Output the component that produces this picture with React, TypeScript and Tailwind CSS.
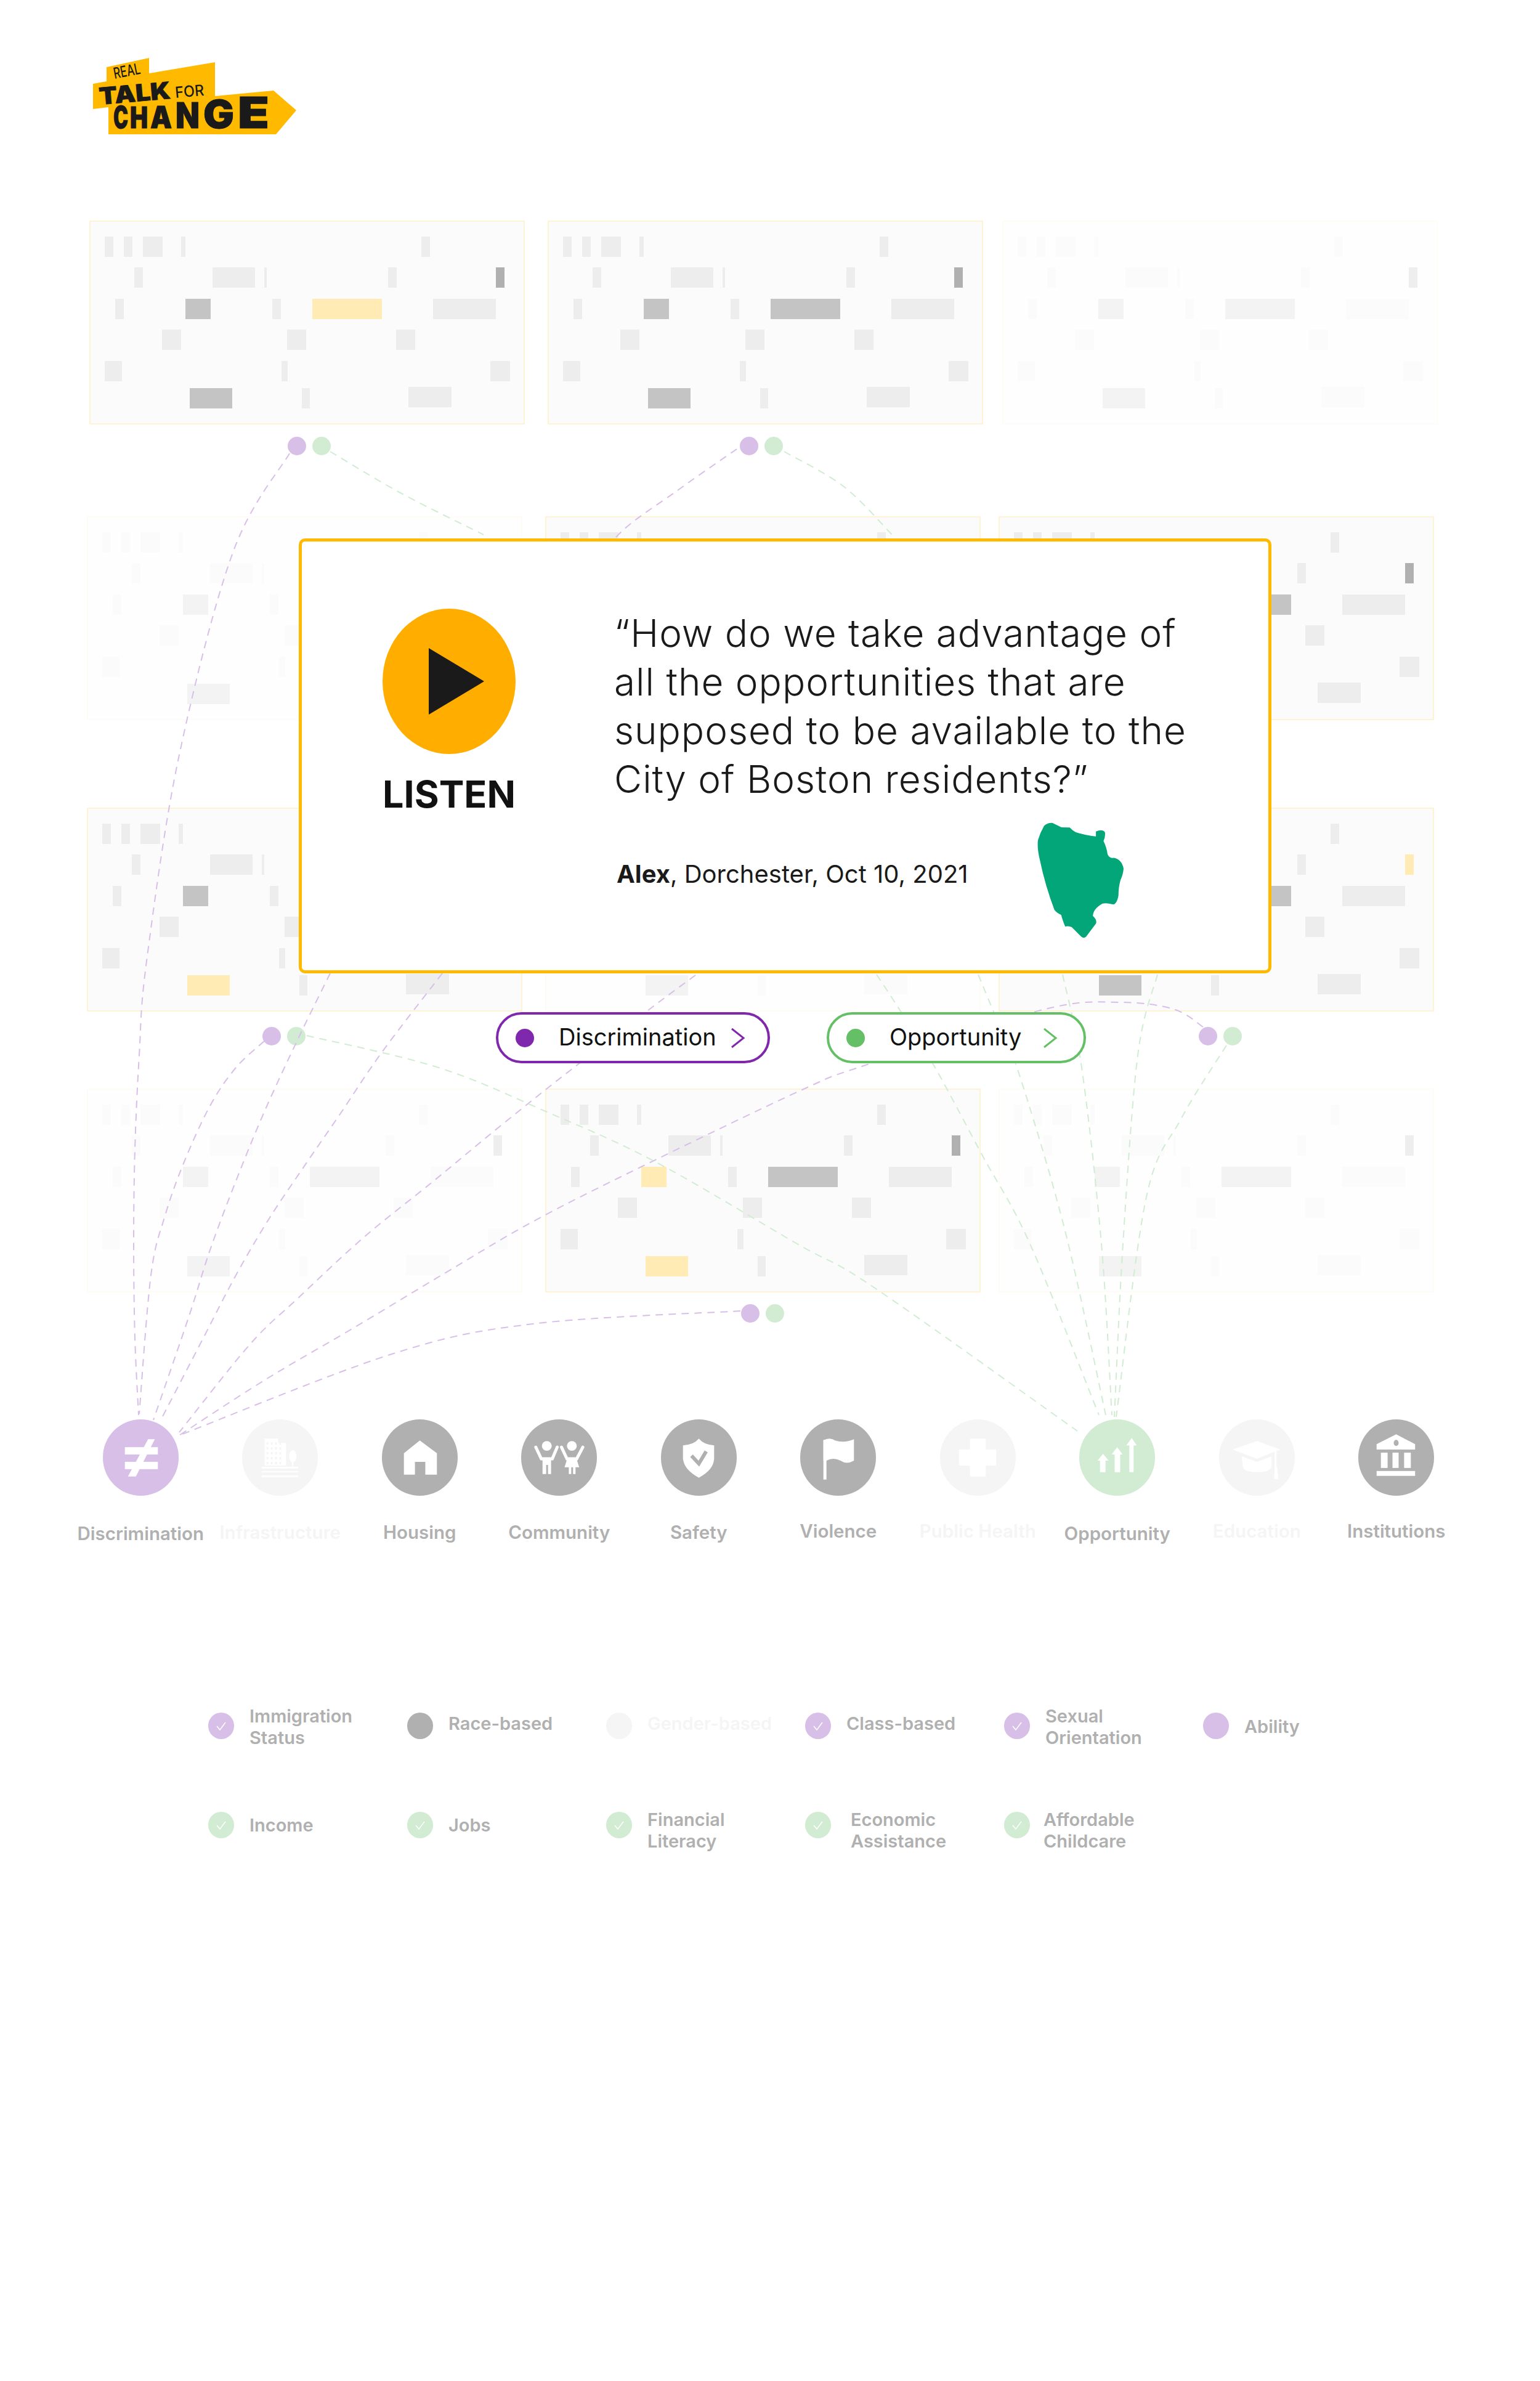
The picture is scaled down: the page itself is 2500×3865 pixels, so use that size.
const PURPLE = "#d8bfe8";
const GREEN = "#d2ecd3";

// [x, y, w, colour key] inside a 707x331 card
const CELLS: { x: number; y: number; w: number; key?: "end" | "a" | "b" | "c" }[] = [
	{ x: 25, y: 26, w: 14 },
	{ x: 56, y: 26, w: 14 },
	{ x: 87, y: 26, w: 32 },
	{ x: 149, y: 26, w: 7 },
	{ x: 539, y: 26, w: 14 },
	{ x: 73, y: 76, w: 14 },
	{ x: 200, y: 76, w: 69 },
	{ x: 284, y: 76, w: 4 },
	{ x: 485, y: 76, w: 14 },
	{ x: 660, y: 76, w: 14, key: "end" },
	{ x: 42, y: 127, w: 14 },
	{ x: 156, y: 127, w: 41, key: "a" },
	{ x: 297, y: 127, w: 14 },
	{ x: 362, y: 127, w: 113, key: "b" },
	{ x: 558, y: 127, w: 102 },
	{ x: 118, y: 177, w: 31 },
	{ x: 321, y: 177, w: 31 },
	{ x: 498, y: 177, w: 31 },
	{ x: 25, y: 228, w: 28 },
	{ x: 312, y: 228, w: 10 },
	{ x: 651, y: 228, w: 32 },
	{ x: 163, y: 272, w: 69, key: "c" },
	{ x: 345, y: 272, w: 13 },
	{ x: 518, y: 270, w: 70 },
];

const GREY = "#c4c4c4";
const DARK = "#b0b0b0";
const YELLOW = "#ffebb3";

function Card({ end = DARK, a = GREY, b = GREY, c = GREY, faint = false }: { end?: string; a?: string; b?: string; c?: string; faint?: boolean }) {
	const colours = { end, a, b, c };
	return (
		<div className={`relative h-[331px] w-[707px] border-2 border-[#fff3d6] bg-[#fbfbfb] ${faint ? "opacity-20" : ""}`}>
			{CELLS.map((cell, i) => (
				<div
					key={i}
					className="absolute h-[33px]"
					style={{ left: cell.x - 2, top: cell.y - 2, width: cell.w, background: cell.key ? colours[cell.key] : "#ededed" }}
				/>
			))}
		</div>
	);
}

function Dots({ className }: { className: string }) {
	return (
		<div className={`flex gap-[10px] ${className}`}>
			<span className="h-[30px] w-[30px] rounded-full bg-[#d8bfe8]" />
			<span className="h-[30px] w-[30px] rounded-full bg-[#d2ecd3]" />
		</div>
	);
}

function smooth(points: number[][]) {
	let d = `M${points[0][0]} ${points[0][1]}`;
	for (let i = 0; i < points.length - 1; i++) {
		const p0 = points[Math.max(i - 1, 0)];
		const p1 = points[i];
		const p2 = points[i + 1];
		const p3 = points[Math.min(i + 2, points.length - 1)];
		const c1x = p1[0] + (p2[0] - p0[0]) / 6;
		const c1y = p1[1] + (p2[1] - p0[1]) / 6;
		const c2x = p2[0] - (p3[0] - p1[0]) / 6;
		const c2y = p2[1] - (p3[1] - p1[1]) / 6;
		d += ` C${c1x} ${c1y} ${c2x} ${c2y} ${p2[0]} ${p2[1]}`;
	}
	return d;
}

const PURPLE_LINES = [
	[[470, 736], [378, 897], [290, 1230], [238, 1560], [226, 1713], [219, 1866], [217, 2019], [219, 2172], [225, 2297]],
	[[429, 1690], [383, 1733], [341, 1795], [299, 1886], [268, 1973], [245, 2070], [226, 2295]],
	[[536, 1580], [483, 1688], [429, 1805], [383, 1917], [341, 2029], [307, 2136], [249, 2305]],
	[[1196, 729], [1100, 796], [1000, 872], [950, 960]],
	[[718, 1580], [620, 1708], [551, 1810], [498, 1887], [437, 1978], [383, 2070], [330, 2172], [261, 2305]],
	[[1129, 1583], [1056, 1637], [938, 1728], [888, 1767], [796, 1841], [704, 1917], [590, 2009], [483, 2108], [406, 2182], [291, 2325]],
	[[1953, 1667], [1905, 1638], [1816, 1627], [1693, 1639], [1402, 1730], [1300, 1770], [1041, 1894], [865, 1983], [720, 2068], [575, 2155], [430, 2240], [291, 2330]],
	[[1202, 2128], [865, 2149], [636, 2198], [291, 2330]],
];

const GREEN_LINES = [
	[[536, 733], [650, 800], [785, 868]],
	[[1273, 733], [1370, 790], [1450, 870]],
	[[498, 1681], [712, 1733], [888, 1805], [1064, 1886], [1294, 2019], [1419, 2090], [1749, 2323]],
	[[1423, 1582], [1461, 1640], [1518, 1733], [1595, 1876], [1672, 2019], [1784, 2297]],
	[[1588, 1582], [1612, 1640], [1651, 1733], [1728, 1994], [1795, 2297]],
	[[1725, 1582], [1756, 1733], [1788, 2019], [1805, 2297]],
	[[1879, 1582], [1847, 1713], [1823, 2019], [1809, 2300]],
	[[1991, 1697], [1918, 1815], [1861, 1943], [1812, 2300]],
];

function Lines() {
	return (
		<svg className="absolute left-0 top-0" width="2500" height="2400" viewBox="0 0 2500 2400" fill="none" strokeWidth="2" strokeDasharray="12 9">
			{PURPLE_LINES.map((pts, i) => (
				<path key={i} d={smooth(pts)} stroke={PURPLE} />
			))}
			{GREEN_LINES.map((pts, i) => (
				<path key={i} d={smooth(pts)} stroke={GREEN} />
			))}
		</svg>
	);
}

const CHANGE = [
	{ t: "C", x: 184, w: 24, s: 49 },
	{ t: "H", x: 211, w: 29, s: 48 },
	{ t: "A", x: 244, w: 35, s: 50 },
	{ t: "N", x: 285, w: 39, s: 58 },
	{ t: "G", x: 330, w: 50, s: 63 },
	{ t: "E", x: 386, w: 51, s: 70 },
];

function Logo() {
	return (
		<svg className="ml-[140px] block" width="350" height="135" viewBox="140 90 350 135" fill="#1a1a1a" fontFamily="Inter, sans-serif">
			<polygon
				fill="#ffba00"
				points="151,136 173,132 173,109 242,94 242,119 349,101 349,156 444,147 481,179 448,218 176,218 176,174 151,177"
			/>
			<text x="186" y="128" fontSize="25" fontWeight="500" textLength="44" lengthAdjust="spacingAndGlyphs" transform="rotate(-11 186 128)">
				REAL
			</text>
			<text x="162" y="170" fontSize="38" fontWeight="900" stroke="#1a1a1a" strokeWidth="0.8" textLength="116" lengthAdjust="spacingAndGlyphs" transform="rotate(-5 162 170)">
				TALK
			</text>
			<text x="285" y="159" fontSize="25" fontWeight="500" textLength="47" lengthAdjust="spacingAndGlyphs" transform="rotate(-5 285 159)">
				FOR
			</text>
			{CHANGE.map((l) => (
				<text key={l.t} x={l.x} y="208" fontSize={l.s} fontWeight="900" stroke="#1a1a1a" strokeWidth="1" textLength={l.w} lengthAdjust="spacingAndGlyphs">
					{l.t}
				</text>
			))}
		</svg>
	);
}

function Popup() {
	return (
		<div className="absolute left-[485px] top-[874px] flex h-[706px] w-[1579px] rounded-[10px] border-[5px] border-[#ffba00] bg-white pl-[131px] pt-[109px]">
			<div className="flex w-[216px] flex-col items-center">
				<div className="flex h-[236px] w-[216px] items-center justify-center rounded-[50%] bg-[#ffae00]">
					<svg className="ml-[24px]" width="90" height="108" viewBox="0 0 90 108">
						<polygon points="0,0 90,54 0,108" fill="#1a1a1a" />
					</svg>
				</div>
				<div className="mt-[29px] whitespace-nowrap text-[61px] font-bold leading-[72px] text-[#111]">LISTEN</div>
			</div>
			<div className="ml-[160px] w-[960px]">
				<p className="text-[62px] font-light leading-[79px] tracking-[1px] text-[#1a1a1a]">
					“How do we take advantage of
					<br />
					all the opportunities that are
					<br />
					supposed to be available to the
					<br />
					City of Boston residents?”
				</p>
				<div className="mt-[31px] flex items-start">
					<p className="ml-[4px] w-[683px] pt-[59px] text-[40px] leading-[50px] text-[#1a1a1a]">
						<b className="font-bold">Alex</b>, Dorchester, Oct 10, 2021
					</p>
					<svg width="140" height="188" viewBox="252 165 421 563">
						<path
							fill="#03a678"
							d="M285 180 Q300 165 325 166 L370 188 L410 189 Q425 205 440 212 Q490 228 538 232 L538 208 Q570 195 582 212 Q585 235 575 255 Q590 285 595 320 Q605 340 625 337 Q665 345 673 390 Q670 420 658 445 Q648 480 648 520 Q640 565 620 564 Q590 555 570 560 Q525 585 523 620 Q545 640 538 658 L490 722 Q478 732 465 720 L420 675 Q400 668 388 672 Q378 650 368 615 Q345 605 335 590 Q290 470 265 350 Q250 290 255 250 Q265 215 285 180 Z"
						/>
					</svg>
				</div>
			</div>
		</div>
	);
}

function Pill({ label, color, className, chevron }: { label: string; color: string; className: string; chevron: string }) {
	return (
		<div className={`absolute top-[1643px] flex h-[83px] items-center rounded-full border-[4px] bg-white pl-[28px] ${className}`} style={{ borderColor: color }}>
			<span className="h-[30px] w-[30px] rounded-full" style={{ background: color }} />
			<span className="-mt-[3px] ml-[40px] text-[38px] leading-none text-[#111]">{label}</span>
			<svg className={`absolute ${chevron}`} width="24" height="34" viewBox="0 0 24 34" fill="none" stroke={color} strokeWidth="3">
				<polyline points="2,2 21,17 2,32" />
			</svg>
		</div>
	);
}

function DiscriminationIcon() {
	return (
		<>
			<rect x="-26" y="-17" width="54" height="12" />
			<rect x="-26" y="7" width="54" height="12" />
			<polygon points="12,-30 23,-30 -8,31 -21,31" />
		</>
	);
}

function BuildingIcon() {
	const windows = [];
	for (let r = 0; r < 5; r++) {
		for (let c = 0; c < 4; c++) {
			windows.push(<rect key={`${r}-${c}`} x={-22 + c * 7} y={-25 + r * 8} width="3" height="4" fill="#f5f5f5" />);
		}
	}
	return (
		<>
			<polygon points="-25,-31 -3,-31 -3,-24 10,-24 10,13 -25,13" />
			{windows}
			<ellipse cx="21" cy="-2" rx="6" ry="10" />
			<rect x="20" y="5" width="2" height="10" />
			<rect x="-30" y="15" width="60" height="3" />
			<rect x="-30" y="22" width="60" height="2" />
			<rect x="-30" y="29" width="60" height="3" />
		</>
	);
}

function HouseIcon() {
	return <path d="M0 -28 L28 -7 L28 28 L9 28 L9 7 L-8 7 L-8 28 L-26 28 L-26 -7 Z" />;
}

function CommunityIcon() {
	return (
		<>
			<circle cx="-20" cy="-19" r="8" />
			<path d="M-38 -17 L-29 2 L-11 2 L-3 -17" fill="none" stroke="white" strokeWidth="5" strokeLinecap="round" />
			<path d="M-27 0 L-13 0 L-13 27 L-18 27 L-18 12 L-21 12 L-21 27 L-27 27 Z" />
			<circle cx="21" cy="-19" r="8" />
			<path d="M4 -17 L13 2 L29 2 L39 -17" fill="none" stroke="white" strokeWidth="5" strokeLinecap="round" />
			<path d="M14 0 L28 0 L33 16 L27 16 L27 27 L23 27 L23 16 L20 16 L20 27 L16 27 L16 16 L9 16 Z" />
		</>
	);
}

function ShieldIcon() {
	return (
		<>
			<path d="M0 -31 Q8 -21 25 -20 L25 2 Q24 20 0 33 Q-24 20 -26 2 L-26 -20 Q-8 -21 0 -31 Z" />
			<path d="M-12 -3 L0 10 L12 -10" fill="none" stroke="#b0b0b0" strokeWidth="6" />
		</>
	);
}

function FlagIcon() {
	return (
		<>
			<rect x="-24" y="-29" width="5" height="65" />
			<path d="M-24 -28 Q-14 -34 -5 -28 Q10 -23 26 -30 L26 5 Q14 12 4 5 Q-8 -1 -19 5 L-24 5 Z" />
		</>
	);
}

function CrossIcon() {
	return <polygon points="-13,-31 13,-31 13,-13 30,-13 30,13 13,13 13,31 -13,31 -13,13 -31,13 -31,-13 -13,-13" />;
}

function ArrowsIcon() {
	return (
		<>
			<polygon points="-23,-6 -14,5 -19,5 -19,24 -28,24 -28,5 -32,5" />
			<polygon points="0,-17 9,-5 5,-5 5,24 -4,24 -4,-5 -9,-5" />
			<polygon points="24,-32 32,-20 27,-20 27,24 20,24 20,-20 15,-20" />
		</>
	);
}

function CapIcon() {
	return (
		<>
			<polygon points="-40,-13 0,-27 38,-13 0,2" />
			<path d="M-25 -2 L0 7 L24 -2 L24 16 Q20 24 0 24 Q-20 24 -23 16 Z" />
			<rect x="29" y="-13" width="3" height="30" />
			<polygon points="29,15 33,15 35,35 28,35" />
		</>
	);
}

function BankIcon() {
	return (
		<>
			<path d="M0 -38 L31 -22 L31 -13 L-32 -13 L-32 -22 Z" />
			<ellipse cx="0" cy="-24" rx="4" ry="5" fill="#b0b0b0" />
			<rect x="-25" y="-8" width="11" height="25" />
			<rect x="-6" y="-8" width="10" height="25" />
			<rect x="13" y="-8" width="11" height="25" />
			<rect x="-32" y="22" width="63" height="8" />
		</>
	);
}

const TOPICS = [
	{ label: "Discrimination", bg: "bg-[#d8bfe8]", text: "text-[#b0b0b0]", icon: <DiscriminationIcon />, pt: "pt-[43px]" },
	{ label: "Infrastructure", bg: "bg-[#f5f5f5]", text: "text-[#f5f5f5]", icon: <BuildingIcon />, pt: "pt-[41px]" },
	{ label: "Housing", bg: "bg-[#b0b0b0]", text: "text-[#b0b0b0]", icon: <HouseIcon />, pt: "pt-[41px]" },
	{ label: "Community", bg: "bg-[#b0b0b0]", text: "text-[#b0b0b0]", icon: <CommunityIcon />, pt: "pt-[41px]" },
	{ label: "Safety", bg: "bg-[#b0b0b0]", text: "text-[#b0b0b0]", icon: <ShieldIcon />, pt: "pt-[41px]" },
	{ label: "Violence", bg: "bg-[#b0b0b0]", text: "text-[#b0b0b0]", icon: <FlagIcon />, pt: "pt-[39px]" },
	{ label: "Public Health", bg: "bg-[#f5f5f5]", text: "text-[#f5f5f5]", icon: <CrossIcon />, pt: "pt-[39px]" },
	{ label: "Opportunity", bg: "bg-[#d2ecd3]", text: "text-[#b0b0b0]", icon: <ArrowsIcon />, pt: "pt-[43px]" },
	{ label: "Education", bg: "bg-[#f5f5f5]", text: "text-[#f5f5f5]", icon: <CapIcon />, pt: "pt-[39px]" },
	{ label: "Institutions", bg: "bg-[#b0b0b0]", text: "text-[#b0b0b0]", icon: <BankIcon />, pt: "pt-[39px]" },
];

const FILTERS = [
	{ lines: ["Immigration", "Status"], bg: "bg-[#d8bfe8]", check: true, pt: "-mt-[3px]" },
	{ lines: ["Race-based"], bg: "bg-[#b0b0b0]", pt: "pt-[9px]" },
	{ lines: ["Gender-based"], bg: "bg-[#f5f5f5]", faint: true, pt: "pt-[9px]" },
	{ lines: ["Class-based"], bg: "bg-[#d8bfe8]", check: true, pt: "pt-[9px]" },
	{ lines: ["Sexual", "Orientation"], bg: "bg-[#d8bfe8]", check: true, pt: "-mt-[3px]" },
	{ lines: ["Ability"], bg: "bg-[#d8bfe8]", pt: "pt-[14px]" },
];

const FILTERS_2 = [
	{ lines: ["Income"], check: true, pt: "pt-[9px]" },
	{ lines: ["Jobs"], check: true, pt: "pt-[9px]" },
	{ lines: ["Financial", "Literacy"], check: true, pt: "" },
	{ lines: ["Economic", "Assistance"], check: true, pt: "ml-[7px]" },
	{ lines: ["Affordable", "Childcare"], check: true, pt: "-ml-[3px]" },
];

function Filter({ lines, bg, check, faint, pt, dotTop }: { lines: string[]; bg: string; check?: boolean; faint?: boolean; pt: string; dotTop: string }) {
	return (
		<div className="flex items-start gap-[25px]">
			<span className={`flex h-[43px] w-[42px] shrink-0 items-center justify-center rounded-full ${bg} ${dotTop}`}>
				{check && (
					<svg width="20" height="16" viewBox="0 0 20 16" fill="none" stroke="white" strokeWidth="1.5">
						<polyline points="3,8 8,14 17,2" />
					</svg>
				)}
			</span>
			<div className={`text-[29px] font-semibold leading-[35px] ${faint ? "text-[#f5f5f5]" : "text-[#b0b0b0]"} ${pt}`}>
				{lines.map((line) => (
					<div key={line} className="whitespace-nowrap">
						{line}
					</div>
				))}
			</div>
		</div>
	);
}

export default function App() {
	return (
		<div className="relative h-[3865px] w-[2500px] overflow-hidden bg-white pt-[90px] font-['Inter',sans-serif]">
			<Logo />

			<div className="ml-[145px] mt-[133px] grid grid-cols-[707px_707px_707px] gap-x-[37px]">
				<div>
					<Card b={YELLOW} />
					<Dots className="ml-[322px] mt-[20px]" />
				</div>
				<div>
					<Card />
					<Dots className="ml-[312px] mt-[20px]" />
				</div>
				<div className="-ml-[6px]">
					<Card faint />
				</div>
			</div>

			<div className="ml-[141px] mt-[99px] grid grid-cols-[707px_707px_707px] gap-x-[37px]">
				<Card faint />
				<Card />
				<div className="-ml-[8px]">
					<Card />
				</div>
			</div>

			<div className="ml-[141px] mt-[142px] grid grid-cols-[707px_707px_707px] gap-x-[37px]">
				<div>
					<Card a={GREY} c={YELLOW} />
					<Dots className="ml-[285px] mt-[25px]" />
				</div>
				<Card faint />
				<div className="-ml-[8px]">
					<Card end={YELLOW} />
					<Dots className="ml-[325px] mt-[25px]" />
				</div>
			</div>

			<div className="ml-[141px] mt-[70px] grid grid-cols-[707px_707px_707px] gap-x-[37px]">
				<Card faint />
				<div>
					<Card a={YELLOW} c={YELLOW} />
					<Dots className="ml-[318px] mt-[19px]" />
				</div>
				<div className="-ml-[8px]">
					<Card faint />
				</div>
			</div>

			<div className="ml-[115px] mt-[157px] grid w-[2265px] grid-cols-10">
				{TOPICS.map((t) => (
					<div key={t.label} className="flex flex-col items-center">
						<div className={`flex h-[124px] w-[123px] items-center justify-center rounded-full ${t.bg}`}>
							<svg width="124" height="124" viewBox="-62 -62 124 124" fill="white">
								{t.icon}
							</svg>
						</div>
						<div className={`whitespace-nowrap text-[29.5px] font-semibold leading-[36px] ${t.text} ${t.pt}`}>{t.label}</div>
					</div>
				))}
			</div>

			<div className="ml-[338px] mt-[264px] grid w-[1938px] grid-cols-6">
				{FILTERS.map((f) => (
					<Filter key={f.lines[0]} {...f} dotTop="mt-[9px]" />
				))}
			</div>
			<div className="ml-[338px] mt-[98px] grid w-[1938px] grid-cols-6">
				{FILTERS_2.map((f) => (
					<Filter key={f.lines[0]} {...f} bg="bg-[#d2ecd3]" dotTop="mt-[5px]" />
				))}
			</div>

			<Lines />
			<Popup />
			<Pill label="Discrimination" color="#7f27ad" className="left-[805px] w-[445px]" chevron="right-[36px]" />
			<Pill label="Opportunity" color="#64bf66" className="left-[1342px] w-[421px]" chevron="right-[42px]" />
		</div>
	);
}
